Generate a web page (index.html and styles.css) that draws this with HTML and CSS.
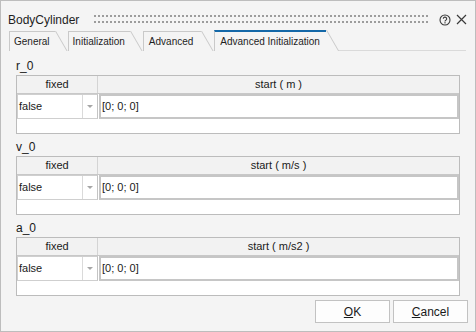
FILE: index.html
```html
<!DOCTYPE html>
<html lang="en">
<head>
    <meta charset="UTF-8">
    <meta name="viewport" content="width=device-width, initial-scale=1.0">
    <title>BodyCylinder</title>
    <link rel="stylesheet" href="styles.css">
</head>
<body>
    <div class="dialog">
        <div class="titlebar">
            <span class="title">BodyCylinder</span>
            <svg class="grip" height="8" preserveAspectRatio="none">
                <defs>
                    <pattern id="dots" width="4" height="6" patternUnits="userSpaceOnUse">
                        <rect x="0" y="0" width="2" height="2" fill="#9c9c9c"></rect>
                    </pattern>
                </defs>
                <rect x="0" y="0" width="100%" height="8" fill="url(#dots)"></rect>
            </svg>
            <svg class="icon help" width="12" height="12" viewBox="0 0 12 12">
                <circle cx="6" cy="6" r="5" fill="none" stroke="#3a3a3a" stroke-width="1.1"></circle>
                <path d="M4.3 4.8a1.7 1.7 0 1 1 2.5 1.5c-.6.3-.8.6-.8 1.2" fill="none" stroke="#3a3a3a" stroke-width="1.1"></path>
                <rect x="5.4" y="8.2" width="1.2" height="1.2" fill="#3a3a3a"></rect>
            </svg>
            <svg class="icon close" width="11" height="11" viewBox="0 0 11 11">
                <path d="M1 1L10 10M10 1L1 10" stroke="#3a3a3a" stroke-width="1.2"></path>
            </svg>
        </div>

        <div class="tabs">
            <div class="tab">General</div>
            <div class="tab">Initialization</div>
            <div class="tab tab-wide">Advanced</div>
            <div class="tab active">Advanced Initialization</div>
        </div>

        <div class="pane">
            <div class="param">
                <div class="param-name">r_0</div>
                <div class="grid">
                    <div class="head">
                        <div class="cell">fixed</div>
                        <div class="cell">start ( m )</div>
                    </div>
                    <div class="row">
                        <div class="combo">
                            <span class="combo-value">false</span>
                            <span class="combo-arrow"></span>
                        </div>
                        <div class="value">[0; 0; 0]</div>
                    </div>
                    <div class="blank"></div>
                </div>
            </div>

            <div class="param">
                <div class="param-name">v_0</div>
                <div class="grid">
                    <div class="head">
                        <div class="cell">fixed</div>
                        <div class="cell">start ( m/s )</div>
                    </div>
                    <div class="row">
                        <div class="combo">
                            <span class="combo-value">false</span>
                            <span class="combo-arrow"></span>
                        </div>
                        <div class="value">[0; 0; 0]</div>
                    </div>
                    <div class="blank"></div>
                </div>
            </div>

            <div class="param">
                <div class="param-name">a_0</div>
                <div class="grid">
                    <div class="head">
                        <div class="cell">fixed</div>
                        <div class="cell">start ( m/s2 )</div>
                    </div>
                    <div class="row">
                        <div class="combo">
                            <span class="combo-value">false</span>
                            <span class="combo-arrow"></span>
                        </div>
                        <div class="value">[0; 0; 0]</div>
                    </div>
                    <div class="blank"></div>
                </div>
            </div>
        </div>

        <div class="buttons">
            <button class="btn"><u>O</u>K</button>
            <button class="btn"><u>C</u>ancel</button>
        </div>
    </div>
</body>
</html>
```

FILE: styles.css
```css
body {
    margin: 0;
    background: #f4f4f4;
    font-family: "Liberation Sans", Arial, sans-serif;
    color: #1a1a1a;
}

.dialog {
    box-sizing: border-box;
    width: 476px;
    height: 332px;
    border: 1px solid #bdbdbd;
    background: #f4f4f4;
    display: flex;
    flex-direction: column;
}

.titlebar {
    box-sizing: border-box;
    height: 30px;
    padding: 8px 8px 0 7px;
    display: flex;
    align-items: center;

    .title {
        font-size: 12px;
        color: #1e1e1e;
    }

    .grip {
        flex: 1;
        margin: 0 9px 0 15px;
        position: relative;
        top: -1px;
    }

    .help {
        margin-right: 5px;
    }
}

.tabs {
    height: 21px;
    padding: 0 9px 0 8px;
    display: flex;
    align-items: flex-end;

    &:after {
        content: "";
        flex: 1;
        border-bottom: 1px solid #dadada;
    }

    .tab {
        position: relative;
        box-sizing: border-box;
        height: 20px;
        padding: 0 5px 0 4px;
        margin-right: 13px;
        border-top: 1px solid #c9c9c9;
        border-left: 1px solid #c9c9c9;
        font-size: 10px;
        line-height: 19px;
        color: #1e1e1e;

        &:after {
            content: "";
            position: absolute;
            top: -1px;
            right: -1px;
            bottom: 0;
            border-right: 1px solid #c9c9c9;
            transform: skewX(30deg);
            transform-origin: top left;
        }

        &.tab-wide {
            padding: 0 8px 0 5px;
        }

        &.active {
            height: 21px;
            padding: 0 6px 0 5px;
            border-top: 2px solid #1468a8;
            line-height: 19px;

            &:after {
                top: -2px;
            }
        }
    }
}

.pane {
    padding: 6px 15px 0;

    .param {
        margin-bottom: 4px;
    }

    .param-name {
        height: 18px;
        font-size: 12px;
        line-height: 18px;
    }
}

.grid {
    border: 1px solid #bcbcbc;
    background: #fff;
    font-size: 11px;

    .head {
        display: grid;
        grid-template-columns: 81px 1fr;
        height: 17px;
        background: #f2f2f2;
        border-bottom: 1px solid #c8c8c8;

        .cell {
            text-align: center;
            line-height: 17px;
        }

        .cell:first-child {
            border-right: 1px solid #d4d4d4;
        }
    }

    .row {
        display: grid;
        grid-template-columns: 81px 1fr;
        height: 25px;
    }

    .combo {
        display: flex;
        border: 1px solid #cfcfcf;
        border-right-color: #c4c4c4;

        .combo-value {
            flex: 1;
            line-height: 23px;
            padding-left: 1px;
        }

        .combo-arrow {
            width: 14px;
            border-left: 1px solid #dadada;
            position: relative;

            &:after {
                content: "";
                position: absolute;
                left: 4px;
                top: 10px;
                border-left: 3px solid transparent;
                border-right: 3px solid transparent;
                border-top: 3px solid #a6a6a6;
            }
        }
    }

    .value {
        border: 2px solid #c6c6c6;
        margin-left: 1px;
        padding-left: 1px;
        line-height: 21px;
    }

    .blank {
        height: 14px;
    }
}

.buttons {
    margin-top: auto;
    padding: 0 7px 8px 0;
    display: flex;
    justify-content: flex-end;
    gap: 3px;

    .btn {
        width: 75px;
        height: 23px;
        background: #fdfdfd;
        border: 1px solid #c2c2c2;
        border-radius: 0;
        font-family: "Liberation Sans", Arial, sans-serif;
        font-size: 12px;
        color: #1a1a1a;
        padding: 0;
    }
}
```
